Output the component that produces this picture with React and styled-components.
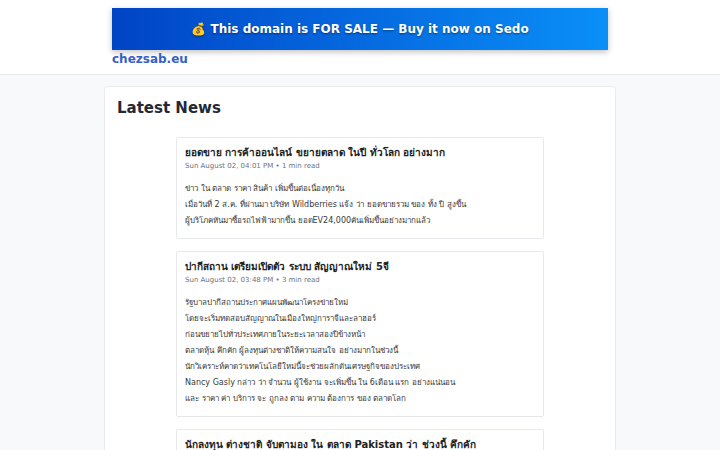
import styled, { createGlobalStyle } from "styled-components";

const GlobalStyle = createGlobalStyle`
  body {
    margin: 0;
    background: #f8f9fa;
    font-family: "DejaVu Sans", "Liberation Sans", sans-serif;
  }
`;

const articles = [
  {
    title: "ยอดขาย การค้าออนไลน์ ขยายตลาด ในปี ทั่วโลก อย่างมาก",
    date: "Sun August 02, 04:01 PM",
    read: "1 min read",
    lines: [
      "ข่าว ใน ตลาด ราคา สินค้า เพิ่มขึ้นต่อเนื่องทุกวัน",
      "เมื่อวันที่ 2 ส.ค. ที่ผ่านมา บริษัท Wildberries แจ้ง ว่า ยอดขายรวม ของ ทั้ง ปี สูงขึ้น",
      "ผู้บริโภคหันมาซื้อรถไฟฟ้ามากขึ้น ยอดEV24,000คันเพิ่มขึ้นอย่างมากแล้ว",
    ],
  },
  {
    title: "ปากีสถาน เตรียมเปิดตัว ระบบ สัญญาณใหม่ 5จี",
    date: "Sun August 02, 03:48 PM",
    read: "3 min read",
    lines: [
      "รัฐบาลปากีสถานประกาศแผนพัฒนาโครงข่ายใหม่",
      "โดยจะเริ่มทดสอบสัญญาณในเมืองใหญ่การาจีและลาฮอร์",
      "ก่อนขยายไปทั่วประเทศภายในระยะเวลาสองปีข้างหน้า",
      "ตลาดหุ้น คึกคัก ผู้ลงทุนต่างชาติให้ความสนใจ อย่างมากในช่วงนี้",
      "นักวิเคราะห์คาดว่าเทคโนโลยีใหม่นี้จะช่วยผลักดันเศรษฐกิจของประเทศ",
      "Nancy Gasly กล่าว ว่า จำนวน ผู้ใช้งาน จะเพิ่มขึ้น ใน 6เดือน แรก อย่างแน่นอน",
      "และ ราคา ค่า บริการ จะ ถูกลง ตาม ความ ต้องการ ของ ตลาดโลก",
    ],
  },
  {
    title: "นักลงทุน ต่างชาติ จับตามอง ใน ตลาด Pakistan ว่า ช่วงนี้ คึกคัก",
    date: "Sun August 02, 03:30 PM",
    read: "2 min read",
    lines: ["ตลาดหุ้นปากีสถานปรับตัวขึ้นต่อเนื่อง"],
  },
];

export default function App() {
  return (
    <>
      <GlobalStyle />
      <Header>
        <HeaderInner>
          <SaleBanner href="#">💰 This domain is FOR SALE — Buy it now on Sedo</SaleBanner>
          <SiteName href="#">chezsab.eu</SiteName>
        </HeaderInner>
      </Header>
      <Main>
        <Card>
          <Heading>Latest News</Heading>
          <ArticleList>
            {articles.map((a, i) => (
              <Article key={i}>
                <ArticleTitle>{a.title}</ArticleTitle>
                <Meta>
                  {a.date} • {a.read}
                </Meta>
                <Body>
                  {a.lines.map((line, j) => (
                    <Line key={j}>{line}</Line>
                  ))}
                </Body>
              </Article>
            ))}
          </ArticleList>
        </Card>
      </Main>
    </>
  );
}

const Header = styled.header`
  background: #fff;
  border-bottom: 1px solid #e6e8eb;
  padding: 8px 0 7px;
`;

const HeaderInner = styled.div`
  width: 496px;
  margin: 0 auto;
  display: flex;
  flex-direction: column;
`;

const SaleBanner = styled.a`
  height: 42px;
  display: flex;
  align-items: center;
  justify-content: center;
  background: linear-gradient(90deg, #0044c6 0%, #0a8ff8 100%);
  color: #fff;
  font-size: 12px;
  font-weight: bold;
  text-decoration: none;
  text-shadow: 0 1px 2px rgba(0, 0, 0, 0.45);
  box-shadow: 0 2px 6px rgba(0, 0, 0, 0.25);
`;

const SiteName = styled.a`
  align-self: flex-start;
  margin-top: 1px;
  font-size: 12px;
  line-height: 16px;
  font-weight: bold;
  color: #3461c9;
  text-decoration: none;
`;

const Main = styled.main`
  padding: 11px 0;
`;

const Card = styled.section`
  width: 512px;
  box-sizing: border-box;
  margin: 0 auto;
  background: #fff;
  border: 1px solid #e9ecef;
  border-radius: 4px;
  padding: 12px;
`;

const Heading = styled.h2`
  margin: 0 0 20px;
  font-size: 15px;
  line-height: 18px;
  font-weight: bold;
  color: #1f2937;
`;

const ArticleList = styled.div`
  width: 368px;
  margin: 0 auto;
  display: flex;
  flex-direction: column;
  gap: 12px;
`;

const Article = styled.article`
  box-sizing: border-box;
  background: #fff;
  border: 1px solid #e6e8eb;
  border-radius: 2px;
  padding: 8px 8px 9px;
`;

const ArticleTitle = styled.h3`
  margin: 0;
  font-size: 10px;
  line-height: 14px;
  font-weight: bold;
  color: #222;
`;

const Meta = styled.div`
  margin-top: 1px;
  font-size: 7px;
  line-height: 10px;
  color: #6b7280;
`;

const Body = styled.div`
  margin-top: 10px;
  font-size: 8px;
  line-height: 16px;
  color: #383838;
`;

const Line = styled.span`
  display: block;
  white-space: nowrap;
`;
